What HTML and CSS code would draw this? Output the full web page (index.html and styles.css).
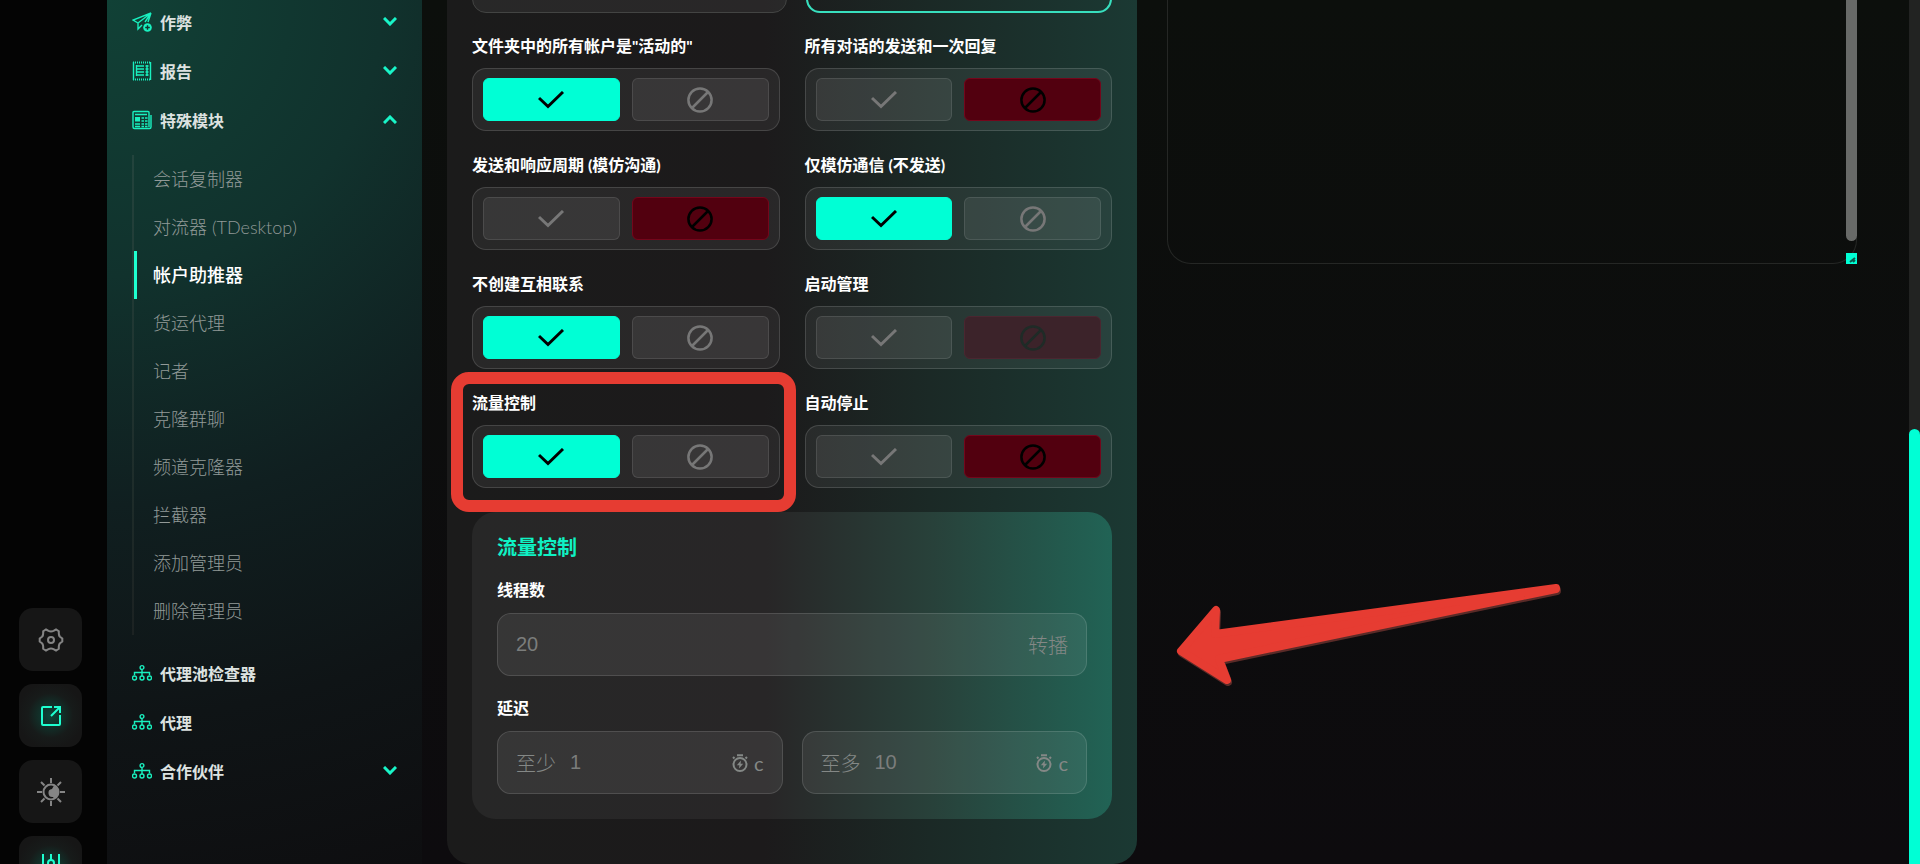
FILE: index.html
```
<!DOCTYPE html>
<html lang="zh">
<head>
    <meta charset="UTF-8">
    <title>帐户助推器</title>
    <link rel="stylesheet" href="styles.css">
    <meta name="viewport" content="width=device-width, initial-scale=1" />
</head>
<body>
<svg class="sprite" aria-hidden="true">
    <symbol id="check" viewBox="0 0 26 18"><path d="M1 7l9 8.500L25 1" /></symbol>
    <symbol id="ban" viewBox="0 0 26 26"><circle cx="13" cy="13" r="11.600" /><path d="M5 21L21 5" /></symbol>
    <symbol id="chevron" viewBox="0 0 14 9"><path d="M1 1l6 6 6-6" /></symbol>
    <symbol id="tree" viewBox="0 0 20 16">
        <circle cx="10" cy="2.500" r="1.900" /><circle cx="2.500" cy="13" r="2" /><circle cx="10" cy="13" r="2" /><circle cx="17.500" cy="13" r="2" />
        <path d="M10 4.500V11M2.500 10V7.500h15V10" />
    </symbol>
    <symbol id="timer" viewBox="0 0 16 18">
        <circle cx="8" cy="10.500" r="6.500" /><path d="M5 1.200h6M1 4.500l1.500-1.500M15 4.500l-1.500-1.500" />
        <path class="solid" d="M9 6.500L4.800 11.200H7.400L7 14.500l4.200-4.700H8.600z" />
    </symbol>
</svg>
<div class="page">
    <aside class="rail">
        <button class="rail-btn" type="button" aria-label="设置">
            <svg width="26" height="26" viewBox="0 0 26 26"><path d="M8 2.500L10.500 3.800Q13 5 15.500 3.800L18 2.500L20.800 4.200Q20.500 8.500 22 9.800L24.300 11.500V14.500L22 16.200Q20.500 17.500 20.800 21.800L18 23.500L15.500 22.200Q13 21 10.500 22.200L8 23.500L5.200 21.800Q5.500 17.500 4 16.200L1.700 14.500V11.500L4 9.800Q5.500 8.500 5.200 4.200Z" /><circle cx="13" cy="13" r="3" /></svg>
        </button>
        <button class="rail-btn on" type="button" aria-label="打开">
            <svg width="22" height="22" viewBox="0 0 22 22"><path d="M12 2H3Q2 2 2 3v16q0 1 1 1h16q1 0 1-1v-9M11 11l9-9M14 2h6v6" /></svg>
        </button>
        <button class="rail-btn" type="button" aria-label="主题">
            <svg width="28" height="28" viewBox="0 0 28 28"><circle cx="14" cy="14" r="7.500" /><path d="M14 0v5M14 23v5M0 14h5M23 14h5M4 4l3.500 3.500M20.500 20.500L24 24M24 4l-3.500 3.500M7.500 20.500L4 24" /><path class="solid" d="M17 7.500a7 7 0 0 1 0 13a4.500 4.500 0 0 1-1-1.500a4 4 0 0 1-1-8z" /></svg>
        </button>
        <button class="rail-btn on" type="button" aria-label="调整">
            <svg width="20" height="28" viewBox="0 0 20 28"><path d="M2 0v17M18 0v17M10 0v6M10 12v16M2 23v5M18 23v5" /><circle cx="10" cy="9" r="3" /><circle cx="2" cy="20" r="3" /><circle cx="18" cy="20" r="3" /></svg>
        </button>
    </aside>
    <nav class="sidebar">
        <a class="nav-item" href="#">
            <svg class="ico" viewBox="0 0 20 20"><path d="M19 1L1 8l5 3zM19 1L6 11v6l4-4M19 1l-6 9M19 1l-3 9" /><circle class="solid" cx="15.500" cy="15.500" r="4.300" /><path class="cut" d="M15.500 13.200v4.600M13.200 15.500h4.600" /></svg>
            <span>作弊</span><svg class="arrow"><use href="#chevron" /></svg>
        </a>
        <a class="nav-item" href="#">
            <svg class="ico" viewBox="0 0 20 20"><path d="M1.500 1v18M18.500 1v18" /><path class="dots" d="M1 1.500h18M1 18.500h18" /><path d="M4 5h8M4 8h8M4 11h8M4 14h8M13.500 5h3M13.500 8h3M13.500 11h3M13.500 14h3M4.500 4v11M15 4v11" /></svg>
            <span>报告</span><svg class="arrow"><use href="#chevron" /></svg>
        </a>
        <a class="nav-item" href="#">
            <svg class="ico" viewBox="0 0 20 20"><path d="M17 17V2.500Q17 1.500 16 1.500H2Q1 1.500 1 2.500V17q0 1.500 1.500 1.500h15q1.500 0 1.500-1.500V5" /><path d="M3 4.500h12M9.500 8h2.500M13 8h2.500M9.500 11h2.500M13 11h2.500M3 14h5M9.500 14h2.500M13 14h2.500M3 16.500h5M9.500 16.500h2.500M13 16.500h2.500" /><path class="solid" d="M3 7h5v4.500H3z" /></svg>
            <span>特殊模块</span><svg class="arrow up"><use href="#chevron" /></svg>
        </a>
        <ul class="submenu">
            <li><a href="#">会话复制器</a></li>
            <li><a href="#">对流器 (TDesktop)</a></li>
            <li><a class="active" href="#">帐户助推器</a></li>
            <li><a href="#">货运代理</a></li>
            <li><a href="#">记者</a></li>
            <li><a href="#">克隆群聊</a></li>
            <li><a href="#">频道克隆器</a></li>
            <li><a href="#">拦截器</a></li>
            <li><a href="#">添加管理员</a></li>
            <li><a href="#">删除管理员</a></li>
        </ul>
        <a class="nav-item" href="#"><svg class="ico"><use href="#tree" /></svg><span>代理池检查器</span></a>
        <a class="nav-item" href="#"><svg class="ico"><use href="#tree" /></svg><span>代理</span></a>
        <a class="nav-item" href="#"><svg class="ico"><use href="#tree" /></svg><span>合作伙伴</span><svg class="arrow"><use href="#chevron" /></svg></a>
    </nav>
    <main class="content">
        <form class="panel">
            <div class="top-row">
                <div class="top-box"></div>
                <div class="top-box selected"></div>
            </div>
            <div class="options">
                <fieldset class="option">
                    <legend>文件夹中的所有帐户是"活动的"</legend>
                    <div class="toggle">
                        <button class="yes" type="button" aria-label="是"><svg class="check"><use href="#check" /></svg></button>
                        <button type="button" aria-label="否"><svg class="ban"><use href="#ban" /></svg></button>
                    </div>
                </fieldset>
                <fieldset class="option">
                    <legend>所有对话的发送和一次回复</legend>
                    <div class="toggle">
                        <button type="button" aria-label="是"><svg class="check"><use href="#check" /></svg></button>
                        <button class="no" type="button" aria-label="否"><svg class="ban"><use href="#ban" /></svg></button>
                    </div>
                </fieldset>
                <fieldset class="option">
                    <legend>发送和响应周期 (模仿沟通)</legend>
                    <div class="toggle">
                        <button type="button" aria-label="是"><svg class="check"><use href="#check" /></svg></button>
                        <button class="no" type="button" aria-label="否"><svg class="ban"><use href="#ban" /></svg></button>
                    </div>
                </fieldset>
                <fieldset class="option">
                    <legend>仅模仿通信 (不发送)</legend>
                    <div class="toggle">
                        <button class="yes" type="button" aria-label="是"><svg class="check"><use href="#check" /></svg></button>
                        <button type="button" aria-label="否"><svg class="ban"><use href="#ban" /></svg></button>
                    </div>
                </fieldset>
                <fieldset class="option">
                    <legend>不创建互相联系</legend>
                    <div class="toggle">
                        <button class="yes" type="button" aria-label="是"><svg class="check"><use href="#check" /></svg></button>
                        <button type="button" aria-label="否"><svg class="ban"><use href="#ban" /></svg></button>
                    </div>
                </fieldset>
                <fieldset class="option">
                    <legend>启动管理</legend>
                    <div class="toggle">
                        <button type="button" aria-label="是"><svg class="check"><use href="#check" /></svg></button>
                        <button class="no dim" type="button" aria-label="否"><svg class="ban"><use href="#ban" /></svg></button>
                    </div>
                </fieldset>
                <fieldset class="option marked">
                    <legend>流量控制</legend>
                    <div class="toggle">
                        <button class="yes" type="button" aria-label="是"><svg class="check"><use href="#check" /></svg></button>
                        <button type="button" aria-label="否"><svg class="ban"><use href="#ban" /></svg></button>
                    </div>
                </fieldset>
                <fieldset class="option">
                    <legend>自动停止</legend>
                    <div class="toggle">
                        <button type="button" aria-label="是"><svg class="check"><use href="#check" /></svg></button>
                        <button class="no" type="button" aria-label="否"><svg class="ban"><use href="#ban" /></svg></button>
                    </div>
                </fieldset>
            </div>
            <section class="card">
                <h2>流量控制</h2>
                <label class="title" for="threads">线程数</label>
                <div class="field">
                    <input id="threads" type="text" placeholder="20">
                    <span class="unit">转播</span>
                </div>
                <label class="title" for="delay-min">延迟</label>
                <div class="pair">
                    <div class="field">
                        <label for="delay-min">至少</label>
                        <input id="delay-min" type="text" placeholder="1">
                        <svg class="timer"><use href="#timer" /></svg><span class="unit">c</span>
                    </div>
                    <div class="field">
                        <label for="delay-max">至多</label>
                        <input id="delay-max" type="text" placeholder="10">
                        <svg class="timer"><use href="#timer" /></svg><span class="unit">c</span>
                    </div>
                </div>
            </section>
        </form>
        <div class="log">
            <textarea aria-label="日志" readonly></textarea>
            <span class="log-thumb"></span>
            <svg class="log-grip" width="11" height="11" viewBox="0 0 11 11"><path d="M4 9l5-4M7 9l2-2" /></svg>
            <svg class="pointer" width="390" height="100" viewBox="0 0 390 100">
                <path class="shade" d="M6 51L41 10L40 34L381 -12L381 -11L44 59L52 80Z" transform="translate(1 2)" />
                <path d="M6 51L41 10L40 34L381 -12L381 -11L44 59L52 80Z" />
            </svg>
        </div>
    </main>
    <div class="scrollbar"><span></span></div>
</div>
</body>
</html>
```
FILE: styles.css
```
*{
    margin: 0px;
    padding: 0px;
    box-sizing: border-box;
}
body{
    height: 100vh;
    overflow: hidden;
    background: #0c0d0c;
    color: #fff;
    font-family: Lato, "Noto Sans CJK SC", sans-serif;
}
svg{
    fill: none;
    stroke: currentColor;
    stroke-width: 2;
    flex: none;
}
.solid{
    fill: currentColor;
    stroke: none;
}
.sprite{
    display: none;
}
button{
    border: 0;
    font: inherit;
    color: inherit;
    display: flex;
    align-items: center;
    justify-content: center;
}
a{
    color: inherit;
    text-decoration: none;
}
.page{
    display: flex;
    height: 100vh;
    overflow: hidden;
}
/* 左侧快捷按钮 */
.rail{
    width: 107px;
    flex: none;
    display: flex;
    flex-direction: column;
    justify-content: flex-end;
    gap: 13px;
    padding-left: 19px;
    margin-bottom: -35px;
    background: #040404;
}
.rail-btn{
    width: 63px;
    height: 63px;
    flex: none;
    border-radius: 14px;
    background: #161616;
    color: #858585;
}
.rail-btn.on{
    color: #1effd0;
    background: radial-gradient(circle, #0c4639 0%, #171b1a 50%, #161616 75%);
}
/* 菜单 */
.sidebar{
    width: 315px;
    flex: none;
    padding: 0 25px;
    background: radial-gradient(circle at 0 0, #114136 0%, #11322d 30%, #101f20 55%, #0f1416 78%, #0e0e10 100%);
}
.nav-item{
    height: 49px;
    display: flex;
    align-items: center;
    gap: 8px;
    font-size: 16px;
    font-weight: 700;
    color: #dde2e0;
}
.nav-item:first-child{
    margin-top: -3px;
}
.ico{
    width: 20px;
    height: 20px;
    stroke-width: 1.4;
    color: #19f0bf;
}
.ico .dots{
    stroke-width: 2;
    stroke-dasharray: 1 1;
}
.ico .cut{
    stroke: #0f372f;
}
.arrow{
    width: 14px;
    height: 9px;
    margin-left: auto;
    stroke-width: 3;
    color: #19f5c8;
}
.arrow.up{
    transform: rotate(180deg);
}
.submenu{
    list-style-type: none;
    margin: 11px 0 13px;
    border-left: 2px solid #23413b;
    border-image: linear-gradient(#23443d, #1c2222) 1;
}
.submenu a{
    display: block;
    height: 48px;
    line-height: 48px;
    padding-left: 16px;
    border-left: 3px solid transparent;
    font-size: 18px;
    font-weight: 300;
    color: #929a98;
}
.submenu a.active{
    border-left-color: #1effd0;
    font-weight: 500;
    color: #fff;
}
/* 主区域 */
.content{
    flex: 1;
    min-width: 0;
    display: grid;
    grid-template-columns: minmax(0, 1fr) minmax(0, 1fr);
    gap: 30px;
    align-items: start;
    padding: 0 52px 0 25px;
    background: linear-gradient(#0c0f0c, #0d0b0e);
}
.panel{
    margin-top: -75px;
    padding: 25px;
    padding-bottom: 45px;
    border-radius: 0 0 24px 24px;
    background: linear-gradient(90deg, #1b1b1b 0%, #1c1a1b 46%, #1b2825 68%, #1b3933 100%);
}
.top-row{
    display: flex;
    gap: 19px;
}
.top-box{
    flex: 316;
    height: 63px;
    border: 1px solid #434443;
    border-radius: 14px;
    background: rgba(255,255,255,.06);
}
.top-box.selected{
    flex: 305;
    border: 2px solid #38dfbe;
    background: none;
}
.options{
    display: grid;
    grid-template-columns: 1fr 1fr;
    gap: 24px 25px;
    margin: 23px 0 24px;
}
.option{
    border: 0;
    min-width: 0;
    position: relative;
}
.option legend,
.title{
    display: block;
    height: 32px;
    line-height: 20px;
    font-size: 16px;
    font-weight: 700;
}
.toggle{
    display: grid;
    grid-template-columns: 1fr 1fr;
    gap: 12px;
    height: 63px;
    padding: 9px 10px;
    border: 1px solid rgba(255,255,255,.14);
    border-radius: 14px;
    background: rgba(255,255,255,.06);
}
.toggle button{
    border: 1px solid rgba(255,255,255,.1);
    border-radius: 6px;
    background: rgba(255,255,255,.07);
    color: #777;
}
.toggle .yes{
    border-color: #00ffd5;
    background: #00ffd5;
    color: #000;
}
.toggle .no{
    border-color: #74061b;
    background: #52000f;
    color: #000;
}
.toggle .dim{
    border-color: #4a2630;
    background: #3c232a;
    color: #1f2b27;
}
.check{
    width: 26px;
    height: 18px;
    stroke-width: 3;
}
.ban{
    width: 26px;
    height: 26px;
    stroke-width: 2.5;
}
/* 红色标注框，从标题上方开始 */
.marked::after{
    content: "";
    position: absolute;
    top: -53px;
    left: -21px;
    right: -16px;
    bottom: -24px;
    border: 12px solid #e63c32;
    border-radius: 18px;
    pointer-events: none;
}
.card{
    padding: 25px;
    border-radius: 24px;
    background: linear-gradient(90deg, #272727 0%, #282627 46%, #28413a 72%, #216355 100%);
}
.card h2{
    height: 42px;
    line-height: 20px;
    font-size: 20px;
    color: #0ff2c4;
}
.card .title{
    height: 34px;
    line-height: 22px;
}
.field{
    display: flex;
    align-items: center;
    min-width: 0;
    height: 63px;
    padding: 0 18px;
    border: 1px solid rgba(255,255,255,.13);
    border-radius: 14px;
    background: rgba(255,255,255,.07);
    color: #848886;
    font-size: 20px;
    font-weight: 300;
}
.field + .title{
    margin-top: 21px;
}
.field label{
    margin-right: 14px;
}
.field input{
    flex: 1;
    width: 100%;
    min-width: 0;
    border: 0;
    outline: 0;
    background: none;
    color: inherit;
    font: 20px "Liberation Sans", sans-serif;
}
.field input::placeholder{
    color: #7b7d7c;
}
.pair{
    display: grid;
    grid-template-columns: 1fr 1fr;
    gap: 19px;
}
.timer{
    width: 16px;
    height: 18px;
    margin-right: 6px;
}
.timer + .unit{
    font-weight: 400;
}
/* 日志 */
.log{
    position: relative;
    height: 264px;
}
.log textarea{
    display: block;
    width: 100%;
    height: 100%;
    resize: none;
    border: 1px solid #252725;
    border-top: 0;
    border-radius: 0 0 24px 24px;
    background: transparent;
    outline: 0;
}
.log-thumb{
    position: absolute;
    top: 0;
    right: 0;
    width: 11px;
    height: 241px;
    border-radius: 0 0 6px 6px;
    background: #686a68;
}
.log-grip{
    position: absolute;
    right: 0;
    bottom: 0;
    background: #00ffd5;
    color: #0b5a4e;
}
.pointer{
    position: absolute;
    top: 600px;
    left: 8px;
    overflow: visible;
    fill: #e63c32;
    color: #e63c32;
    stroke-width: 8;
    stroke-linejoin: round;
}
.pointer .shade{
    fill: #5a2b28;
    stroke: #5a2b28;
}
/* 页面滚动条 */
.scrollbar{
    width: 11px;
    flex: none;
    display: flex;
    align-items: flex-end;
    background: #222322;
}
.scrollbar span{
    width: 100%;
    height: 435px;
    border-radius: 6px 6px 0 0;
    background: #00ffd5;
}
```
